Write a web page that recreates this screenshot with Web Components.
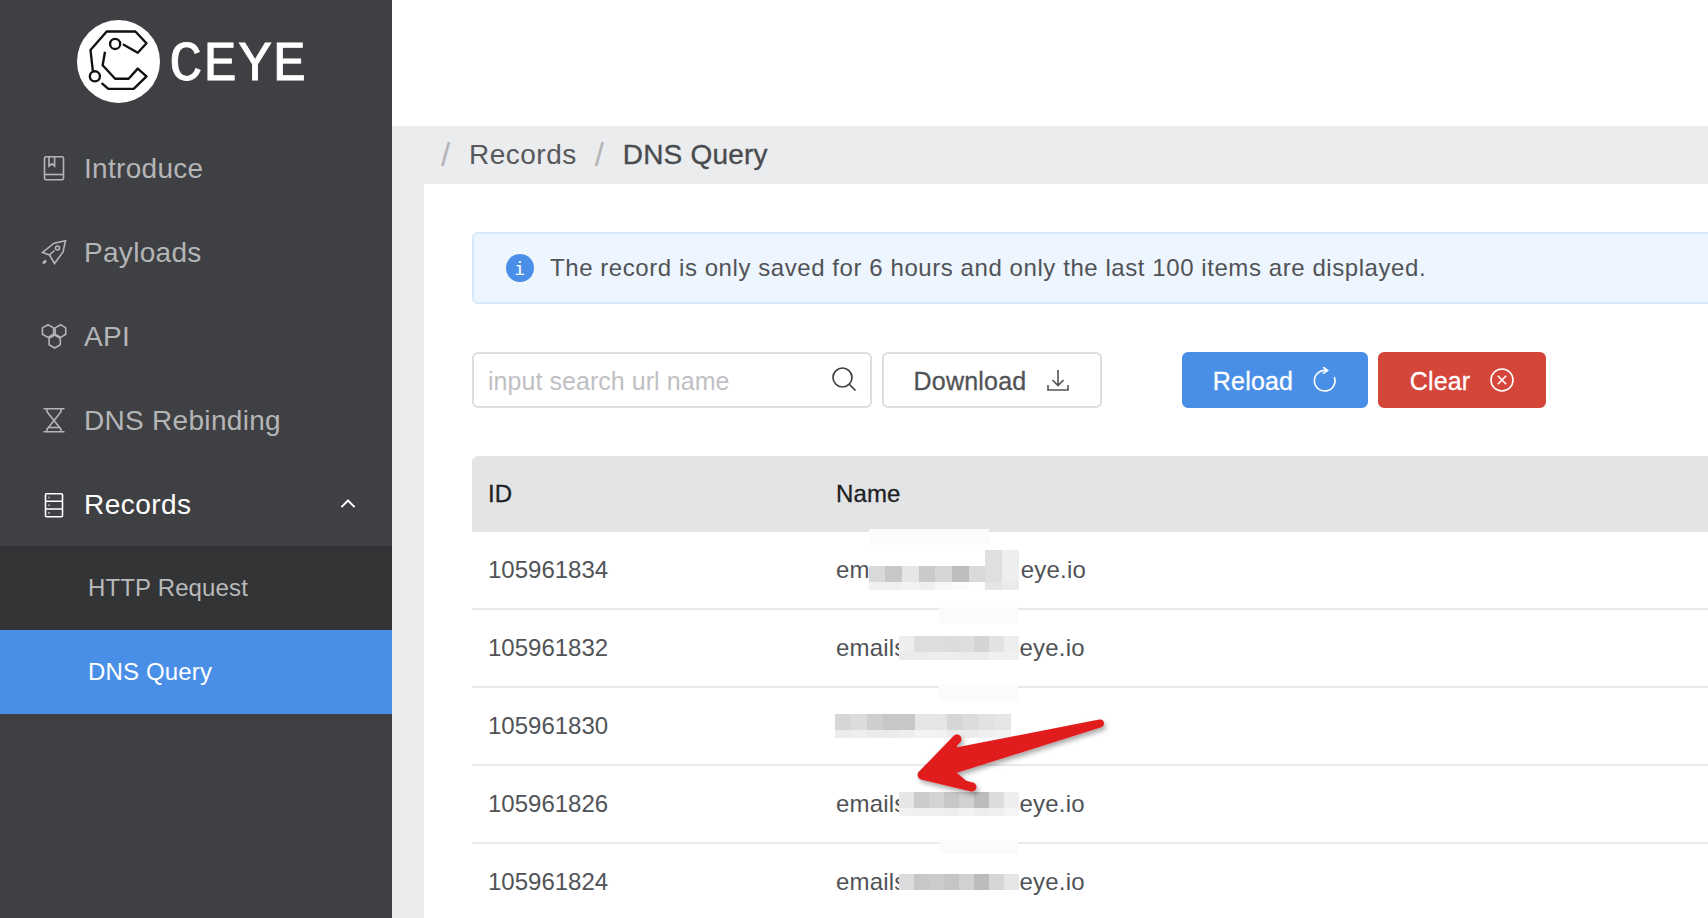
<!DOCTYPE html>
<html>
<head>
<meta charset="utf-8">
<title>CEYE</title>
<style>
    html, body { margin: 0; height: 100%; overflow: hidden; }
    body {
        display: flex;
        width: 1708px;
        height: 918px;
        font-family: "Liberation Sans", Arial, sans-serif;
        color: #515357;
        background: #ebecee;
    }
</style>
</head>
<body>
<ceye-sidebar></ceye-sidebar>
<ceye-main>
    <ceye-alert>The record is only saved for 6 hours and only the last 100 items are displayed.</ceye-alert>
    <ceye-toolbar></ceye-toolbar>
    <ceye-table></ceye-table>
</ceye-main>

<script>
const ICONS = {
    book: '<rect x="3.500" y=".7" width="19" height="23" rx="1.500"/><path d="M3.500 18.500h19"/><path d="M8 .7v9.300l2.800-2.200 2.800 2.200V.7"/>',
    rocket: '<path d="M24.500 .7 13 3.200 1.500 12.500l7 2.500 5 8.500 8.500-11.500z"/><path d="M8.500 15l5 -4.500"/><circle cx="16.500" cy="8" r="2"/><path d="M2 23.500l3-3" stroke-width="2.600"/>',
    cubes: '<path d="M7 .7l5.600 3.200v6.300L7 13.400l-5.600-3.200V3.900z"/><path d="M19.700 .7l5 3.200v6.300l-5 3.200-5.600-3.200V3.900z"/><path d="M13.700 11l5.600 3.200v6.500L13.700 24l-5.600-3.300v-6.500z"/>',
    hourglass: '<path d="M2.500 .8h21M2.500 23.700h21"/><path d="M6 .8v3l7 8.700-7 8.700v2.500M20 .8v3l-7 8.700 7 8.700v2.500"/><path d="M8 19.500h10"/>',
    server: '<rect x="4.500" y="1.700" width="17" height="23" rx="1"/><path d="M4.500 9.300h17M4.500 17h17"/><path d="M7.500 5.500h1M7.500 13.200h1M7.500 20.900h1"/>',
    chevron: '<path d="M5 16l7.500-7.500L20 16"/>'
}

class NavItem extends HTMLElement {
    constructor() {
        super()
        this.attachShadow({ mode: "open" })
        const icon = ICONS[this.getAttribute("icon")]
        this.shadowRoot.innerHTML = `
            <style>
                :host {
                    display: flex;
                    align-items: center;
                    height: 84px;
                    box-sizing: border-box;
                    padding: 2px 0 0 41px;
                    color: #b4b5b7;
                    font-size: 28px;
                    letter-spacing: 0.3px;
                }
                :host([open]) { color: #fff; letter-spacing: 0.45px; }
                svg { width: 25px; height: 25px; margin: -2px 18px 0 0; fill: none; stroke: currentColor; stroke-width: 1.600; overflow: visible; }
                .chevron { margin: -2px 0 0 auto; position: relative; right: 33px; width: 22px; height: 22px; stroke-width: 2.200; }
            </style>
            <svg viewBox="0 0 25 25">${icon}</svg><slot></slot>
            ${this.hasAttribute("open") ? `<svg class="chevron" viewBox="0 0 25 25">${ICONS.chevron}</svg>` : ""}
        `
    }
}
customElements.define("nav-item", NavItem)

class SubItem extends HTMLElement {
    constructor() {
        super()
        this.attachShadow({ mode: "open" })
        this.shadowRoot.innerHTML = `
            <style>
                :host {
                    display: flex;
                    align-items: center;
                    height: 84px;
                    padding-left: 88px;
                    background: #333436;
                    color: #b9babc;
                    font-size: 24px;
                    letter-spacing: 0.15px;
                }
                :host([active]) { background: #4a8fe7; color: #fff; }
            </style>
            <slot></slot>
        `
    }
}
customElements.define("sub-item", SubItem)

class CeyeSidebar extends HTMLElement {
    constructor() {
        super()
        this.attachShadow({ mode: "open" })
        this.shadowRoot.innerHTML = `
            <style>
                :host {
                    display: block;
                    flex: none;
                    width: 392px;
                    height: 918px;
                    background: #3f4043;
                }
                .logo {
                    display: flex;
                    align-items: center;
                    height: 126px;
                    box-sizing: border-box;
                    padding: 0 0 4px 77px;
                }
                .logo svg { width: 83px; height: 83px; flex: none; }
                .word {
                    margin: 8px 0 0 9px;
                    font: 56px/1 "Liberation Mono", monospace;
                    letter-spacing: 1px;
                    color: #fff;
                    -webkit-text-stroke: 0.8px #fff;
                }
            </style>
            <div class="logo">
                <svg viewBox="232 61 246 246">
                    <circle cx="355" cy="184" r="123" fill="#fff"/>
                    <g fill="none" stroke="#111" stroke-width="7" stroke-linejoin="round">
                        <path d="M279 212 272 150 320 95H405L438 130 412 158 368 133"/>
                        <path d="M315 155 308 195 345 235H385L412 205 438 228 400 265H325L305 248"/>
                        <circle cx="345" cy="132" r="15"/>
                        <circle cx="285" cy="228" r="15"/>
                    </g>
                </svg>
                <span class="word">CEYE</span>
            </div>
            <nav-item icon="book">Introduce</nav-item>
            <nav-item icon="rocket">Payloads</nav-item>
            <nav-item icon="cubes">API</nav-item>
            <nav-item icon="hourglass">DNS Rebinding</nav-item>
            <nav-item icon="server" open>Records</nav-item>
            <sub-item>HTTP Request</sub-item>
            <sub-item active>DNS Query</sub-item>
        `
    }
}
customElements.define("ceye-sidebar", CeyeSidebar)

class CeyeMain extends HTMLElement {
    constructor() {
        super()
        this.attachShadow({ mode: "open" })
        this.shadowRoot.innerHTML = `
            <style>
                :host {
                    display: block;
                    flex: none;
                    width: 1316px;
                    height: 918px;
                    overflow: hidden;
                }
                .top { height: 126px; background: #fff; }
                .crumbs {
                    display: flex;
                    align-items: center;
                    height: 58px;
                    padding-left: 49px;
                    font-size: 28px;
                    letter-spacing: 0.5px;
                    color: #58595c;
                }
                .sep { font-size: 33px; font-weight: normal; color: #b3b4b6; width: 28px; }
                .sep + span { margin-right: 18px; }
                .now { color: #4a4b4e; letter-spacing: 0.2px; -webkit-text-stroke: 0.35px #4a4b4e; }
                .gutter { padding-left: 32px; }
                .card {
                    width: 1400px;
                    height: 734px;
                    box-sizing: border-box;
                    padding: 48px 0 0 48px;
                    background: #fff;
                }
            </style>
            <div class="top"></div>
            <div class="crumbs">
                <span class="sep">/</span><span>Records</span>
                <span class="sep">/</span><span class="now">DNS Query</span>
            </div>
            <div class="gutter"><div class="card"><slot></slot></div></div>
        `
    }
}
customElements.define("ceye-main", CeyeMain)

class CeyeAlert extends HTMLElement {
    constructor() {
        super()
        this.attachShadow({ mode: "open" })
        this.shadowRoot.innerHTML = `
            <style>
                :host {
                    display: flex;
                    align-items: center;
                    height: 72px;
                    box-sizing: border-box;
                    padding-left: 32px;
                    background: #edf5fe;
                    border: 2px solid #d8e8fb;
                    border-radius: 6px;
                    font-size: 24px;
                    letter-spacing: 0.57px;
                    color: #515357;
                    margin-bottom: 48px;
                }
                .dot {
                    flex: none;
                    display: flex;
                    align-items: center;
                    justify-content: center;
                    width: 28px;
                    height: 28px;
                    margin-right: 16px;
                    border-radius: 50%;
                    background: #4a8fe7;
                    color: #fff;
                    font: 18px "DejaVu Sans Mono", monospace;
                }
            </style>
            <span class="dot">i</span><slot></slot>
        `
    }
}
customElements.define("ceye-alert", CeyeAlert)

class CeyeButton extends HTMLElement {
    constructor() {
        super()
        this.attachShadow({ mode: "open" })
        this.shadowRoot.innerHTML = `
            <style>
                :host {
                    display: flex;
                    align-items: center;
                    justify-content: center;
                    gap: 18px;
                    height: 56px;
                    box-sizing: border-box;
                    padding-top: 2px;
                    border-radius: 6px;
                    font-size: 25px;
                    letter-spacing: 0.2px;
                    -webkit-text-stroke: 0.3px currentColor;
                    border: 2px solid #dcdddf;
                    color: #515357;
                }
                :host([kind="primary"]) { background: #4a8fe7; border-color: #4a8fe7; color: #fff; }
                :host([kind="danger"]) { background: #d4453a; border-color: #d4453a; color: #fff; }
                ::slotted(svg) { width: 26px; height: 26px; margin: -2px -1px 0 1px; fill: none; stroke: currentColor; stroke-width: 1.600; }
            </style>
            <slot></slot>
        `
    }
}
customElements.define("ceye-button", CeyeButton)

class CeyeToolbar extends HTMLElement {
    constructor() {
        super()
        this.attachShadow({ mode: "open" })
        this.shadowRoot.innerHTML = `
            <style>
                :host {
                    display: flex;
                    height: 56px;
                    margin-bottom: 48px;
                }
                .search {
                    display: flex;
                    align-items: center;
                    justify-content: space-between;
                    width: 400px;
                    box-sizing: border-box;
                    padding: 2px 12px 0 14px;
                    border: 2px solid #dcdddf;
                    border-radius: 6px;
                    font-size: 25px;
                    letter-spacing: 0.05px;
                    color: #bfc0c3;
                    margin-right: 10px;
                }
                .search svg { width: 28px; height: 28px; fill: none; stroke: #3f4043; stroke-width: 1.700; margin-top: -5px; }
                ceye-button svg { display: block; }
                .download { width: 220px; margin-right: 80px; }
                .reload { width: 186px; margin-right: 10px; }
                .clear { width: 168px; }
            </style>
            <div class="search">
                <span>input search url name</span>
                <svg viewBox="0 0 28 28"><circle cx="12.500" cy="12.500" r="9.500"/><path d="M19.500 19.500l6 6"/></svg>
            </div>
            <ceye-button class="download">Download
                <svg viewBox="0 0 26 26"><path d="M13 3v15M7.500 13l5.500 5.500 5.500-5.500M3 18v5h20v-5"/></svg>
            </ceye-button>
            <ceye-button class="reload" kind="primary">Reload
                <svg viewBox="0 0 26 26"><path d="M15 3.700A10.300 10.300 0 1 0 22.300 10"/><path d="M11 0l4.600 3.400L11 6.700"/></svg>
            </ceye-button>
            <ceye-button class="clear" kind="danger">Clear
                <svg viewBox="0 0 26 26"><circle cx="13" cy="13" r="11"/><path d="M8.800 8.800l8.400 8.400M17.200 8.800l-8.400 8.400"/></svg>
            </ceye-button>
        `
    }
}
customElements.define("ceye-toolbar", CeyeToolbar)

// the pixelated part of a name, "|" splits the rows, "h:" gives the height of a row
class MosaicPatch extends HTMLElement {
    constructor() {
        super()
        this.attachShadow({ mode: "open" })
        const rows = this.getAttribute("data").split("|").map(row => {
            const [h, cells] = row.split(":")
            const boxes = cells.split(",").map(c => `<i style="background:#${c}"></i>`).join("")
            return `<div class="r" style="height:${h}px">${boxes}</div>`
        }).join("")
        this.shadowRoot.innerHTML = `
            <style>
                :host { display: block; flex: none; width: ${this.getAttribute("w")}px; }
                .r { display: flex; }
                i { flex: 1; }
            </style>
            ${rows}
        `
    }
}
customElements.define("mosaic-patch", MosaicPatch)

class TableRow extends HTMLElement {
    constructor() {
        super()
        this.attachShadow({ mode: "open" })
        this.shadowRoot.innerHTML = `
            <style>
                :host {
                    display: flex;
                    align-items: center;
                    height: 78px;
                    box-sizing: border-box;
                    border-bottom: 2px solid #e8e9eb;
                    font-size: 24px;
                    color: #515357;
                }
                .id { width: 348px; padding-left: 16px; box-sizing: border-box; }
                .name { display: flex; align-items: center; flex: 1; padding-left: 16px; }
                ::slotted(span) { letter-spacing: 0.2px; }
            </style>
            <div class="id">${this.getAttribute("rid")}</div>
            <div class="name"><slot></slot></div>
        `
    }
}
customElements.define("table-row", TableRow)

class CeyeTable extends HTMLElement {
    constructor() {
        super()
        this.attachShadow({ mode: "open" })
        this.shadowRoot.innerHTML = `
            <style>
                :host { display: block; position: relative; }
                .head {
                    display: flex;
                    align-items: center;
                    height: 76px;
                    background: #e3e4e6;
                    border-radius: 6px 6px 0 0;
                    font-size: 24px;
                    letter-spacing: 0.15px;
                    color: #202124;
                    -webkit-text-stroke: 0.3px #202124;
                }
                .head div:first-child { width: 348px; padding-left: 16px; box-sizing: border-box; }
                .head div:last-child { padding-left: 16px; }
                .smudge { position: absolute; background: #fbfbfd; }
                svg { position: absolute; left: 440px; top: 256px; overflow: visible; }
            </style>
            <div class="head"><div>ID</div><div>Name</div></div>
            <table-row rid="105961834">
                <span>em</span>
                <mosaic-patch w="150" style="margin:-1px 0 0 -1px" data="14:ffffff,ffffff,ffffff,ffffff,ffffff,ffffff,ffffff,dedfe1,eeeeef|2:ffffff,ffffff,ffffff,ffffff,ffffff,ffffff,ffffff,dedfe1,eeeeef|16:d8d9da,c6c7c8,e6e6e7,c9cacb,d5d6d7,bdbec0,d8d9da,dedfe1,eeeeef|8:f0f0f1,f0f0f1,f3f3f4,eeeeef,f7f7f8,fbfbfc,fdfdfe,e4e5e6,ebebec"></mosaic-patch>
                <span style="margin-left:2px">eye.io</span>
            </table-row>
            <table-row rid="105961832">
                <span>emails</span>
                <mosaic-patch w="120" style="margin-left:-8px" data="16:eeeeef,dddee0,dddee0,dcdcde,dddee0,d3d4d6,e2e2e4,eeeeef|8:ebebec,ebebec,eeeeef,eeeeef,ebebec,ebebec,f0f0f1,f0f0f1"></mosaic-patch>
                <span style="margin-left:1px">eye.io</span>
            </table-row>
            <table-row rid="105961830">
                <mosaic-patch w="176" style="margin-left:-1px" data="16:d5d6d7,dcdcde,cdcecf,c6c7c8,c6c7c8,e6e6e7,e4e5e6,d5d6d7,dcdcde,e2e2e4,e6e6e7|8:ececed,eeeeef,ececed,ebebec,eeeeef,f3f3f4,f2f2f3,ececed,ececed,f0f0f1,f2f2f3"></mosaic-patch>
            </table-row>
            <table-row rid="105961826">
                <span>emails</span>
                <mosaic-patch w="120" style="margin-left:-8px" data="16:e6e6e7,cacbcc,d3d4d6,c6c7c8,d0d1d2,bbbcbe,dcdcde,eeeeef|8:f2f2f3,f0f0f1,f0f0f1,eeeeef,f2f2f3,eeeeef,f0f0f1,f5f5f6"></mosaic-patch>
                <span style="margin-left:1px">eye.io</span>
            </table-row>
            <table-row rid="105961824">
                <span>emails</span>
                <mosaic-patch w="120" style="margin-left:-8px" data="16:dcdcde,c6c7c8,cacbcc,c4c5c6,d0d1d2,bbbcbe,d5d6d7,e6e6e7"></mosaic-patch>
                <span style="margin-left:1px">eye.io</span>
            </table-row>
            <div class="smudge" style="left:397px;top:73px;width:120px;height:16px"></div>
            <div class="smudge" style="left:467px;top:151px;width:79px;height:16px"></div>
            <div class="smudge" style="left:467px;top:229px;width:79px;height:16px"></div>
            <div class="smudge" style="left:467px;top:384px;width:79px;height:14px"></div>
            <svg width="190" height="70">
                <defs><filter id="s" x="-10%" y="-20%" width="120%" height="150%"><feDropShadow dx="2" dy="3" stdDeviation="2.500" flood-color="#000" flood-opacity=".35"/></filter></defs>
                <g filter="url(#s)" fill="#e01b1e" stroke="#e01b1e" stroke-linejoin="round" stroke-linecap="round">
                    <path d="M188 11.500 28 62 37 41z" stroke-width="8"/>
                    <path d="M45 27 10 63 60 75" fill="none" stroke-width="9"/>
                    <path d="M45 27 10 63 60 75 40 58z" stroke-width="2"/>
                </g>
            </svg>
        `
    }
}
customElements.define("ceye-table", CeyeTable)
</script>
</body>
</html>
